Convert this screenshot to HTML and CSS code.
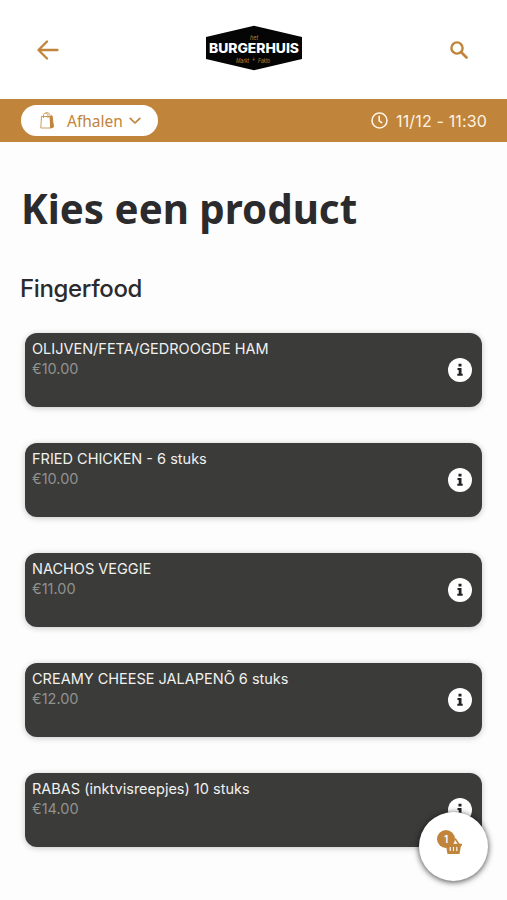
FILE: index.html
```html
<!DOCTYPE html>
<html lang="nl">
<head>
    <meta charset="UTF-8">
    <meta name="viewport" content="width=device-width, initial-scale=1.0">
    <title>Het Burgerhuis - Bestellen</title>
    <link rel="stylesheet" href="styles.css">
</head>
<body>
    <header>
        <button class="icon-btn" aria-label="Terug">
            <svg width="22" height="20" viewBox="0 0 22 20" fill="none" stroke="currentColor" stroke-width="2.3" stroke-linecap="round" stroke-linejoin="round">
                <path d="M20.5 10H1.8M10 1.5L1.5 10l8.5 8.5"/>
            </svg>
        </button>
        <svg class="logo" width="98" height="46" viewBox="0 0 98 46">
            <path d="M49 .8L97 12v22L49 45.2 1 34V12z" fill="#050505"/>
            <text class="logo-script" x="45" y="14.5" textLength="8" lengthAdjust="spacingAndGlyphs">het</text>
            <text class="logo-name" x="4" y="27.5" textLength="90" lengthAdjust="spacingAndGlyphs">BURGERHUIS</text>
            <text class="logo-script" x="31" y="37.5" textLength="13" lengthAdjust="spacingAndGlyphs">Markt</text>
            <text class="logo-script" x="47" y="37" textLength="3" lengthAdjust="spacingAndGlyphs">+</text>
            <text class="logo-script" x="53" y="37.5" textLength="12" lengthAdjust="spacingAndGlyphs">Fakto</text>
        </svg>
        <button class="icon-btn" aria-label="Zoeken">
            <svg width="18" height="18" viewBox="0 0 18 18" fill="none" stroke="currentColor" stroke-linecap="round">
                <circle cx="7" cy="7" r="5.6" stroke-width="2.4"/>
                <path d="M11.5 11.5l5 5" stroke-width="2.7"/>
            </svg>
        </button>
    </header>

    <div class="order-bar">
        <button class="order-type">
            <svg width="15" height="17" viewBox="0 0 15 17" fill="none" stroke="currentColor">
                <path d="M1.5 4.5h8.7l.5 11.5H.8z" stroke-width=".8"/>
                <path d="M10.2 4.5l1.8-.8L13.5 15l-2.8 1z" fill="currentColor"/>
                <path d="M3.5 6V3.8C3.5 0 8 0 8 3.8V6M5.5 1.5C6.5 0 10 .5 10 3.8" stroke-width=".8"/>
            </svg>
            <span>Afhalen</span>
            <svg class="chevron" width="12" height="8" viewBox="0 0 12 8" fill="none" stroke="currentColor" stroke-width="1.7" stroke-linecap="round" stroke-linejoin="round">
                <path d="M1.2 1.3L6 6l4.8-4.7"/>
            </svg>
        </button>
        <div class="order-time">
            <svg width="17" height="17" viewBox="0 0 17 17" fill="none" stroke="currentColor" stroke-width="1.6" stroke-linecap="round">
                <circle cx="8.5" cy="8.5" r="7.5"/>
                <path d="M8.2 4.3v4.5l2.5 1.8"/>
            </svg>
            <span>11/12 - 11:30</span>
        </div>
    </div>

    <main>
        <h1>Kies een product</h1>
        <h2>Fingerfood</h2>

        <ul class="products">
            <li class="product">
                <div>
                    <h3>OLIJVEN/FETA/GEDROOGDE HAM</h3>
                    <p>€10.00</p>
                </div>
                <svg class="info" viewBox="0 0 24 24"><circle cx="12" cy="12" r="12"/><path d="M10.5 5.7h3v2.7h-3zM9.5 10h4v5.8h1.2v2H9.3v-2h1.4V12H9.5z"/></svg>
            </li>
            <li class="product">
                <div>
                    <h3>FRIED CHICKEN - 6 stuks</h3>
                    <p>€10.00</p>
                </div>
                <svg class="info" viewBox="0 0 24 24"><circle cx="12" cy="12" r="12"/><path d="M10.5 5.7h3v2.7h-3zM9.5 10h4v5.8h1.2v2H9.3v-2h1.4V12H9.5z"/></svg>
            </li>
            <li class="product">
                <div>
                    <h3>NACHOS VEGGIE</h3>
                    <p>€11.00</p>
                </div>
                <svg class="info" viewBox="0 0 24 24"><circle cx="12" cy="12" r="12"/><path d="M10.5 5.7h3v2.7h-3zM9.5 10h4v5.8h1.2v2H9.3v-2h1.4V12H9.5z"/></svg>
            </li>
            <li class="product">
                <div>
                    <h3>CREAMY CHEESE JALAPENÕ 6 stuks</h3>
                    <p>€12.00</p>
                </div>
                <svg class="info" viewBox="0 0 24 24"><circle cx="12" cy="12" r="12"/><path d="M10.5 5.7h3v2.7h-3zM9.5 10h4v5.8h1.2v2H9.3v-2h1.4V12H9.5z"/></svg>
            </li>
            <li class="product">
                <div>
                    <h3>RABAS (inktvisreepjes) 10 stuks</h3>
                    <p>€14.00</p>
                </div>
                <svg class="info" viewBox="0 0 24 24"><circle cx="12" cy="12" r="12"/><path d="M10.5 5.7h3v2.7h-3zM9.5 10h4v5.8h1.2v2H9.3v-2h1.4V12H9.5z"/></svg>
            </li>
        </ul>
    </main>

    <button class="cart" aria-label="Winkelmand">
        <svg width="19" height="17" viewBox="0 0 18 17">
            <path d="M3.5 6.5L7 1.2M14.5 6.5L11 1.2" fill="none" stroke="currentColor" stroke-width="1.6" stroke-linecap="round"/>
            <path d="M.5 5.8h17v2h-1L15 16H3L1.5 7.8h-1z" fill="currentColor"/>
            <path d="M5.7 9v4M9 9v4M12.3 9v4" stroke="#fff" stroke-width="1.1"/>
        </svg>
        <span class="cart-count">1</span>
    </button>
</body>
</html>
```

FILE: styles.css
```css
:root {
    --primary: #c0843a;
    --background: #fdfdfd;
    --card-bg: #3b3b39;
    --text: #2b2b2d;
    --text-secondary: #91918f;
}

* {
    margin: 0;
    padding: 0;
    box-sizing: border-box;
}

body {
    font-family: 'Inter', sans-serif;
    background: var(--background);
    color: var(--text);
    height: 100vh;
    overflow: hidden;
}

button {
    border: 0;
    background: none;
    font: inherit;
    color: var(--primary);
}

svg {
    display: block;
}

header {
    height: 99px;
    padding: 0 37px;
    display: grid;
    grid-template-columns: 1fr auto 1fr;
    align-items: center;
    background: #fff;
}

.icon-btn {
    justify-self: start;
}

.icon-btn:last-child {
    justify-self: end;
    margin-right: 2px;
}

.logo {
    margin-bottom: 4px;
}

.logo-name {
    font-family: 'Inter', sans-serif;
    font-size: 12.8px;
    font-weight: 800;
    fill: #fff;
}

.logo-script {
    font-family: 'Liberation Sans', sans-serif;
    font-size: 7px;
    font-style: italic;
    fill: #b88335;
}

.order-bar {
    height: 43px;
    padding: 0 20px 0 21px;
    display: flex;
    align-items: center;
    justify-content: space-between;
    background: var(--primary);
}

.order-type {
    width: 137px;
    height: 31px;
    padding-left: 19px;
    display: flex;
    align-items: center;
    border-radius: 16px;
    background: #fff;
    font-family: 'Noto Sans', sans-serif;
    font-size: 15.5px;
}

.order-type span {
    margin-left: 12px;
}

.chevron {
    margin-left: 6px;
}

.order-time {
    display: flex;
    align-items: center;
    gap: 8px;
    color: #fff3e3;
    font-size: 16px;
    letter-spacing: 0.15px;
}

main {
    padding: 43px 25px 0;
}

h1 {
    margin-left: -4px;
    font-family: 'Noto Sans', sans-serif;
    font-size: 40.3px;
    font-weight: 700;
    line-height: 48px;
}

h2 {
    margin: 40px 0 0 -5px;
    font-size: 24px;
    font-weight: 500;
    line-height: 32px;
    letter-spacing: -0.35px;
}

.products {
    margin-top: 28px;
    display: flex;
    flex-direction: column;
    gap: 36px;
    list-style: none;
}

.product {
    height: 74px;
    padding: 6px 10px 0 7px;
    display: flex;
    justify-content: space-between;
    border-radius: 12px;
    background: var(--card-bg);
    box-shadow: 0 1px 6px rgba(0, 0, 0, 0.22);
}

.product h3 {
    color: #f1f1f0;
    font-size: 14.5px;
    font-weight: 400;
    line-height: 20px;
}

.product p {
    color: var(--text-secondary);
    font-size: 14.5px;
    line-height: 20px;
}

.info {
    width: 24px;
    height: 24px;
    margin-top: 19px;
}

.info circle {
    fill: #fff;
}

.info path {
    fill: #222;
}

.cart {
    position: fixed;
    right: 19px;
    bottom: 19px;
    width: 69px;
    height: 69px;
    display: flex;
    align-items: center;
    justify-content: center;
    border-radius: 50%;
    background: #fff;
    box-shadow: 0 1px 6px rgba(0, 0, 0, 0.75);
}

.cart-count {
    position: absolute;
    left: 18px;
    top: 18px;
    width: 18px;
    height: 18px;
    border-radius: 50%;
    background: var(--primary);
    color: #fff;
    font-size: 10px;
    font-weight: 600;
    line-height: 18px;
    text-align: center;
}
```
